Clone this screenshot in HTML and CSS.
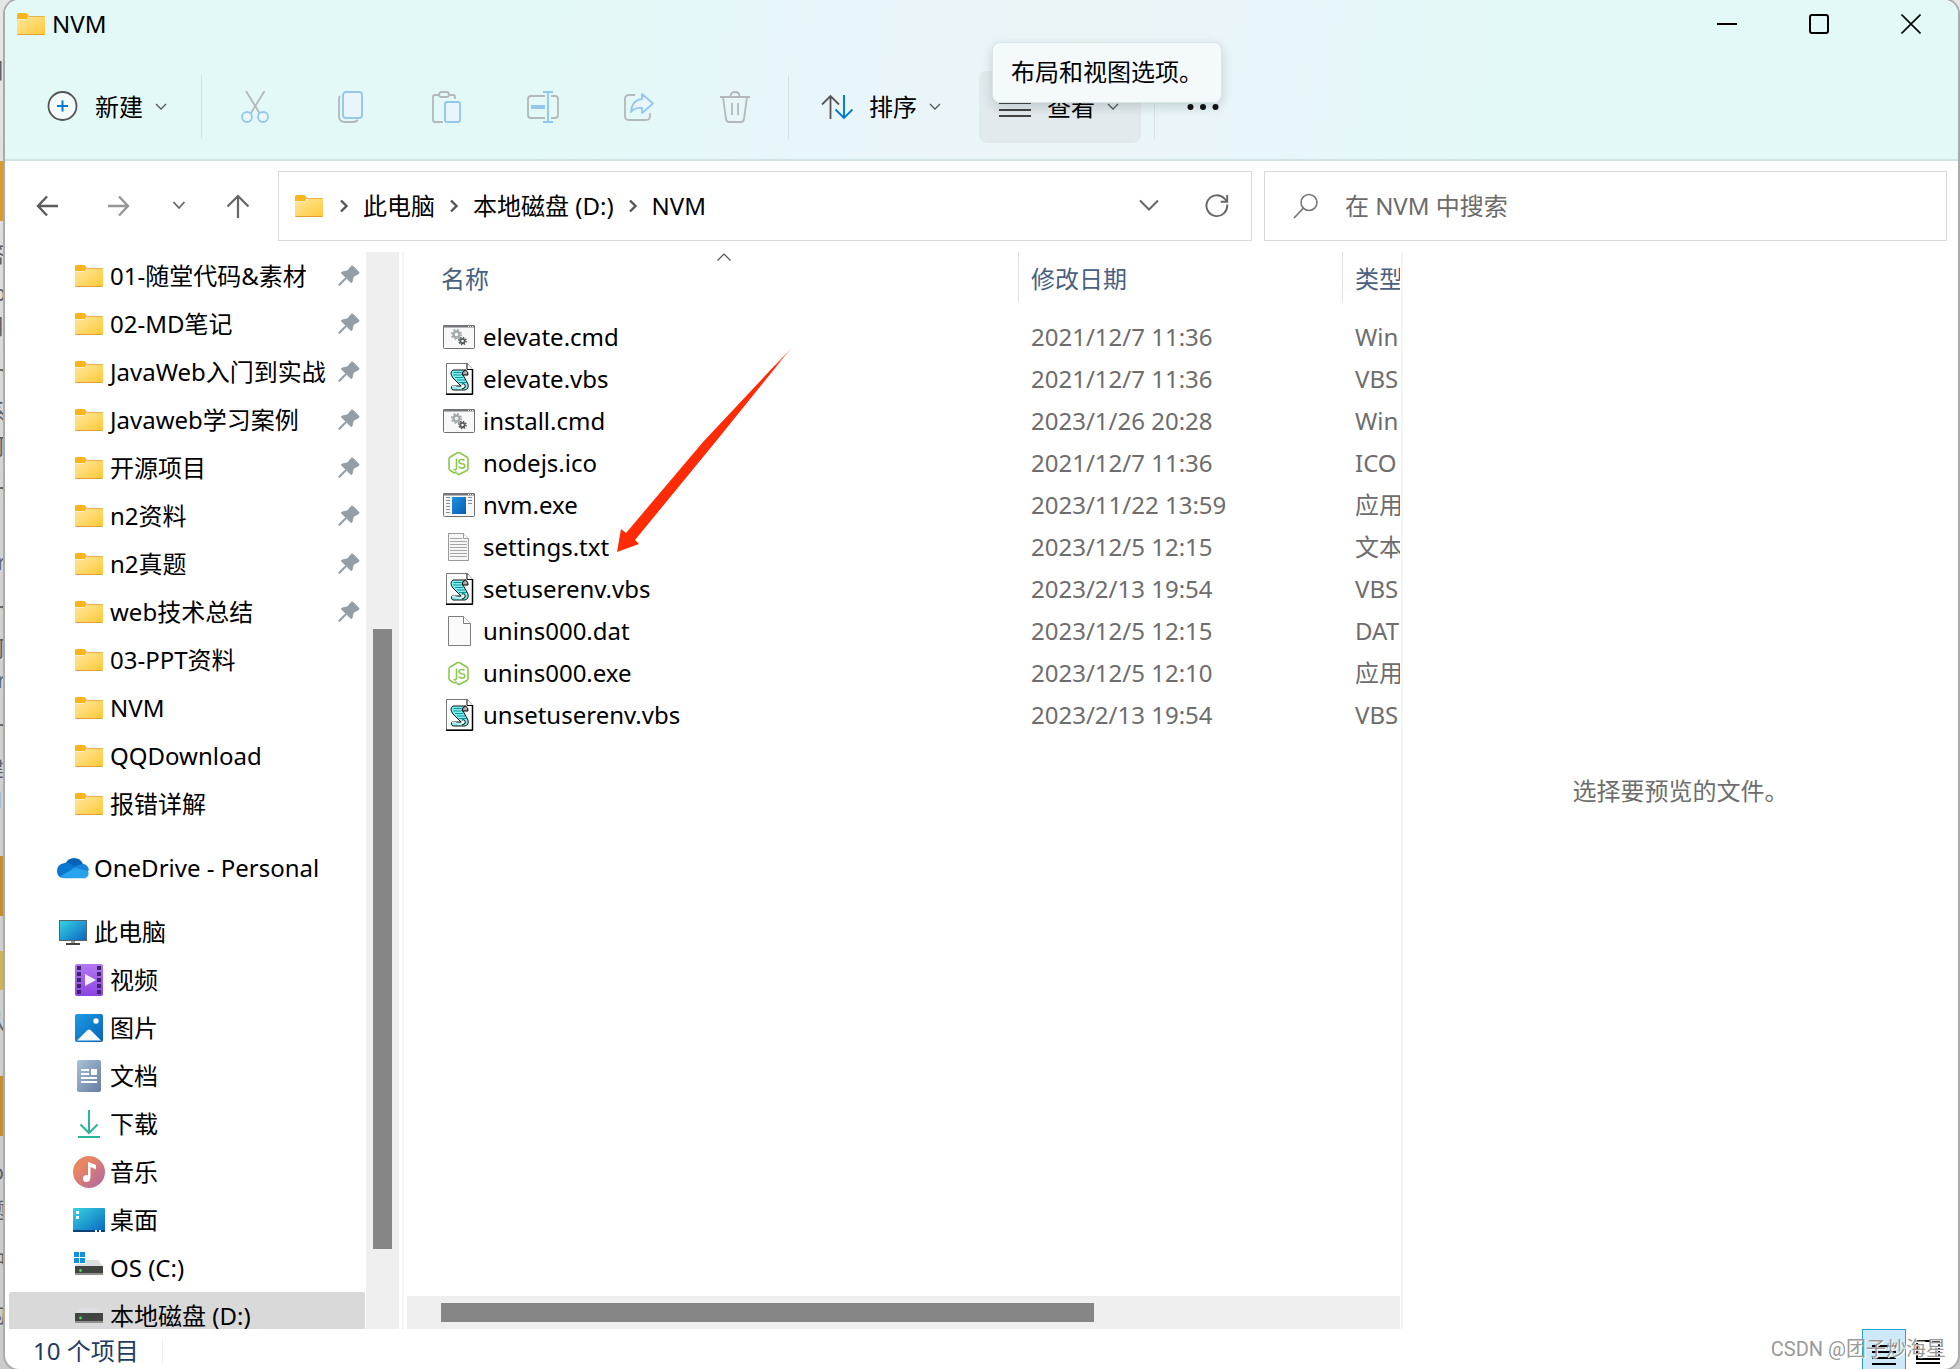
FILE: index.html
```html
<!DOCTYPE html>
<html lang="zh-CN">
<head>
<meta charset="utf-8">
<title>NVM</title>
<link rel="stylesheet" href="styles.css">
</head>
<body>
<svg class="defs" width="0" height="0" aria-hidden="true">
  <defs>
    <linearGradient id="g-folder" x1="0" y1="0" x2="1" y2="1"><stop offset="0" stop-color="#ffe8a0"/><stop offset="1" stop-color="#ffc937"/></linearGradient>
    <linearGradient id="g-screen" x1="0" y1="0" x2="1" y2="1"><stop offset="0" stop-color="#35d3e2"/><stop offset="1" stop-color="#0b66c0"/></linearGradient>
    <linearGradient id="g-video" x1="0" y1="0" x2="0" y2="1"><stop offset="0" stop-color="#b478f2"/><stop offset="1" stop-color="#8a45e0"/></linearGradient>
    <linearGradient id="g-pic" x1="0" y1="0" x2="1" y2="1"><stop offset="0" stop-color="#1c9be6"/><stop offset="1" stop-color="#0a62b4"/></linearGradient>
    <linearGradient id="g-doc" x1="0" y1="0" x2="1" y2="1"><stop offset="0" stop-color="#a9c1d6"/><stop offset="1" stop-color="#667da3"/></linearGradient>
    <linearGradient id="g-music" x1="0" y1="0" x2="1" y2="1"><stop offset="0.3" stop-color="#e88663"/><stop offset="1" stop-color="#ac64a8"/></linearGradient>
    <linearGradient id="g-app" x1="0" y1="0" x2="1" y2="1"><stop offset="0" stop-color="#1c93e0"/><stop offset="1" stop-color="#0a5cae"/></linearGradient>
    <linearGradient id="g-arrow" gradientUnits="userSpaceOnUse" x1="176" y1="0" x2="130" y2="54"><stop offset="0" stop-color="#ff2b06" stop-opacity="0.2"/><stop offset="0.4" stop-color="#ff2b06"/></linearGradient>
  </defs>
  <symbol id="folder" viewBox="0 0 32 32">
    <path d="M2 6.500q0-1.500 1.500-1.500h7q1 0 1.800.8l1.700 2.200-2 3H2z" fill="#fbb51c"/>
    <path d="M2 11.500h9q1 0 1.800-.9l1.600-1.600q.8-1 1.800-1H29q1 0 1 1v16.500q0 1.500-1.500 1.500h-25Q2 27 2 25.500z" fill="url(#g-folder)"/>
    <path d="M2.500 26.500h27" stroke="#e3a12b"/>
    <path d="M14 8.500h15.500" stroke="#eab043"/>
  </symbol>
  <symbol id="pin" viewBox="0 0 24 24">
    <path d="M14 2.500q1-1.200 2.200 0l5.300 5.300q1.200 1.200-.2 2l-5 2.700-1.300 5.500q-.4 1.200-1.300.3l-4-4-6.500 6.800q-1 .6-1.300.3t.3-1.300l6.600-6.700-4-4q-.8-.9.300-1.300l5.700-1.300z" fill="#949ea4" stroke="#949ea4"/>
  </symbol>
  <symbol id="onedrive" viewBox="0 0 32 32">
    <path d="M8 12q3-6 9-6 6.500 0 9 6l-5 7-13-2z" fill="#0562b4"/>
    <path d="M6.500 11.300q5-1.500 9 1.700l9 6-18 7Q0 25.600 0 18.700q.3-6 6.500-7.400z" fill="#0a78d0"/>
    <path d="M22 12.700q8-2.500 10 5.300l-4 5-12-7q2.500-2.600 6-3.300z" fill="#1584da"/>
    <path d="M3.500 24.300L18 15.500l13 3.800q2 4.500-2.500 7H7q-2.500-.3-3.500-2z" fill="#28a2ea"/>
  </symbol>
  <symbol id="pc" viewBox="0 0 32 32">
    <path d="M14 24h4v3h-4z" fill="#9a9a9a"/><path d="M9 27h14v2H9z" fill="#444"/>
    <rect x="2.500" y="4.500" width="27" height="20" fill="url(#g-screen)" stroke="#5a6266"/>
  </symbol>
  <symbol id="video" viewBox="0 0 32 32">
    <rect x="2" y="0" width="28" height="32" rx="2" fill="url(#g-video)"/>
    <path d="M4 2h4v4H4zm0 6h4v4H4zm0 6h4v4H4zm0 6h4v4H4zm0 6h4v4H4zM24 2h4v4h-4zm0 6h4v4h-4zm0 6h4v4h-4zm0 6h4v4h-4zm0 6h4v4h-4z" fill="#3d2370"/>
    <path d="M12 10v12l11-6z" fill="#f3ecfb"/>
  </symbol>
  <symbol id="picture" viewBox="0 0 32 32">
    <rect x="2" y="2" width="28" height="28" rx="2" fill="url(#g-pic)"/>
    <path d="M4 28.500l10.500-10.500q1.500-1.200 3 0L28 28.500z" fill="#f4f9fd"/><circle cx="23" cy="9" r="2.700" fill="#fff"/>
  </symbol>
  <symbol id="document" viewBox="0 0 32 32">
    <rect x="4" y="0" width="24" height="32" rx="2" fill="url(#g-doc)"/>
    <path d="M8 9h8v2H8zm0 4h8v2H8zm10-4h6v6h-6zM8 17h16v2H8zm0 4h16v2H8z" fill="#fff"/>
  </symbol>
  <symbol id="download" viewBox="0 0 32 32"><path d="M16 2v23M7.500 16.500l8.500 8.500 8.500-8.500M5 29h22" fill="none" stroke="#2cb59a" stroke-width="2"/></symbol>
  <symbol id="music" viewBox="0 0 32 32">
    <circle cx="16" cy="16" r="16" fill="url(#g-music)"/>
    <circle cx="13.500" cy="22.500" r="3.500" fill="#fff"/><path d="M15 22.500V6l8 3v4.500L17.500 11v11.500z" fill="#fff"/>
  </symbol>
  <symbol id="desktop" viewBox="0 0 32 32">
    <rect x="0" y="4" width="32" height="24" rx="1" fill="url(#g-screen)"/>
    <path d="M0 26h32v1q0 1-1 1H1q-1 0-1-1z" fill="#0a3f78"/>
    <path d="M3 7h3v3H3zm0 5h3v3H3zM22 26h2v2h-2zm4 0h2v2h-2z" fill="#fff"/>
  </symbol>
  <symbol id="drive" viewBox="0 0 32 32">
    <path d="M7 8h18l5 5H2z" fill="#dedfe2"/><path d="M2 13h28v9H2z" fill="#414441"/><path d="M2 21h28v2H2z" fill="#8f918f"/><circle cx="7.500" cy="18" r="1.400" fill="#3ee34a"/>
  </symbol>
  <symbol id="osdrive" viewBox="0 0 32 32">
    <path d="M7 8h18l5 6H2z" fill="#dedfe2"/><path d="M2 14h28v7H2z" fill="#414441"/><path d="M2 21h28v2H2z" fill="#8f918f"/><circle cx="7.500" cy="18.500" r="1.400" fill="#3ee34a"/>
    <path d="M0 0h13v12H0z" fill="#fff"/><path d="M1 0h5v5H1zm6 0h5v5H7zM1 6h5v5H1zm6 0h5v5H7z" fill="#1490df"/>
  </symbol>
  <symbol id="cmd" viewBox="0 0 32 32">
    <rect x="0.500" y="4.500" width="31" height="23" rx="1" fill="#f8f8f8" stroke="#6d6f71"/><path d="M0 5.500h32" stroke="#75777a" stroke-width="2"/><path d="M25 5.500h6" stroke="#e8e8e8" stroke-dasharray="1 1"/>
    <circle cx="13.500" cy="13.500" r="3" fill="none" stroke="#a3a9ac" stroke-width="2.400"/><circle cx="13.500" cy="13.500" r="4.700" fill="none" stroke="#a3a9ac" stroke-width="1.800" stroke-dasharray="1.850 1.850"/>
    <circle cx="19.500" cy="20" r="2.200" fill="none" stroke="#55595c" stroke-width="1.800"/><circle cx="19.500" cy="20" r="3.600" fill="none" stroke="#55595c" stroke-width="1.500" stroke-dasharray="1.410 1.410"/>
  </symbol>
  <symbol id="vbs" viewBox="0 0 32 32">
    <path d="M3.500 0.500h21l5 6v24.500h-26z" fill="#fff" stroke="#777"/><path d="M29.500 6v25M3 31.300h27" stroke="#000" stroke-width="1.500"/><path d="M24 .5v6h5.500" fill="#fff" stroke="#000"/>
    <path d="M10 7h13q-4 2-3 5l5 9q1 5-3 6H10q-3-1-1-4h9l-8-8q-4-5 0-8z" fill="#7ff0f0" stroke="#111"/>
    <path d="M10.500 9.500h8M10 12h8M12 14.500h8M14 17h8M16 19.500h8" stroke="#0a9296"/>
    <path d="M19 12q0-4 3.500-5 3 2 2.500 5z" fill="#aaa" stroke="#000"/><path d="M19 21q4-1 3 3.500l-3 1.500" fill="#fff" stroke="#000"/><path d="M9 23.500q3-1 5 1t5 0" fill="none" stroke="#fff"/>
  </symbol>
  <symbol id="node" viewBox="0 0 32 32">
    <path d="M13.500 24.500q-1.300 2-3 1l-3.300-2q-1.200-.7-1.200-2V12q0-1.300 1.200-2l7.100-4.200q1.200-.6 2.400 0l7.100 4.200q1.200.7 1.200 2v9.500q0 1.300-1.200 2L16 27.500l-2.500-1.200" fill="none" stroke="#8cc84b" stroke-width="1.600"/>
    <path d="M13.500 11.500v9q0 3-3 2M21.500 13.500q-1-1-3-1-2.500 0-2.500 2t2.800 2.200q3 0 3 2.200t-3 2.200q-2.500 0-3.200-1.600" fill="none" stroke="#8cc84b" stroke-width="1.600"/>
  </symbol>
  <symbol id="exe" viewBox="0 0 32 32">
    <rect x="0.500" y="4.500" width="31" height="23" rx="1" fill="#f8f8f8" stroke="#6d6f71"/><path d="M0 5.500h32" stroke="#75777a" stroke-width="2"/><path d="M25 5.500h6" stroke="#e8e8e8" stroke-dasharray="1 1"/>
    <rect x="9" y="8" width="14" height="17" fill="url(#g-app)"/><path d="M3 8.500h4m-4 3h4m-4 3h4m-4 3h4m-4 3h4m-4 3h4M25 8.500h4m-4 3h4m-4 3h4" stroke="#8b8e90"/>
  </symbol>
  <symbol id="txt" viewBox="0 0 32 32">
    <path d="M5.500 2.500h15l5 5v22h-20z" fill="#f6f6f6" stroke="#9a9a9a"/><path d="M20.500 2.500v5h5" fill="#fff" stroke="#9a9a9a"/>
    <path d="M7 7.500h12M7 10.500h17M7 13.500h17M7 16.500h17M7 19.500h17M7 22.500h17M7 25.500h17" stroke="#a6a6a6"/>
  </symbol>
  <symbol id="dat" viewBox="0 0 32 32"><path d="M5.500 1.500h15l7 7v22h-22z" fill="#fafafa" stroke="#7d7d7d"/><path d="M20.500 1.500v7h7" fill="#fff" stroke="#7d7d7d"/></symbol>
  <symbol id="chev" viewBox="0 0 12 12"><path d="M1 3l5 5 5-5" fill="none" stroke="#555" stroke-width="1.300"/></symbol>
  <symbol id="crumb" viewBox="0 0 12 16"><path d="M3 2.500L8.500 8 3 13.500" fill="none" stroke="#555" stroke-width="2.400"/></symbol>
</svg>

<svg class="backdrop" aria-hidden="true">
  <g text-anchor="end">
    <text x="5" y="78">目</text><text x="6" y="262">答</text><text x="6" y="301">b</text><text x="4" y="334">用</text><text x="7" y="381">m</text><text x="6" y="420">系</text><text x="6" y="454">可</text><text x="7" y="499">m</text><text x="6" y="570">r</text><text x="7" y="618">m</text><text x="6" y="656">可</text><text x="6" y="688">r</text><text x="7" y="736">m</text><text x="4" y="776">建</text><text x="2" y="808">l</text><text x="6" y="1030">从</text><text x="4" y="1180">o</text><text x="6" y="1218">题</text><text x="6" y="1268">中</text><text x="6" y="1322">构</text>
  </g>
</svg>

<div class="window">
  <header class="chrome">
    <div class="titlebar">
      <svg class="icon"><use href="#folder"/></svg>
      <h1 class="title">NVM</h1>
      <div class="controls">
        <button aria-label="最小化"><svg width="20" height="20" viewBox="0 0 20 20"><path d="M0 10h20" stroke="#000" stroke-width="2"/></svg></button>
        <button aria-label="最大化"><svg width="20" height="20" viewBox="0 0 20 20"><rect x="1" y="1" width="18" height="18" rx="2" fill="none" stroke="#000" stroke-width="2"/></svg></button>
        <button aria-label="关闭"><svg width="20" height="20" viewBox="0 0 20 20"><path d="M.5.5l19 19m0-19l-19 19" stroke="#000" stroke-width="1.600"/></svg></button>
      </div>
    </div>
    <div class="toolbar">
      <button class="tool"><svg class="icon" viewBox="0 0 32 32"><circle cx="15.500" cy="15" r="14" fill="#f4fbfd" stroke="#555" stroke-width="1.800"/><path d="M15.500 9.500v11M10 15h11" stroke="#0078d4" stroke-width="2"/></svg><span>新建</span><svg class="chev"><use href="#chev"/></svg></button>
      <span class="sep after-new"></span>
      <button class="tool-icon" aria-label="剪切" disabled><svg class="icon" viewBox="0 0 32 32"><path d="M7 0l13.500 22M25.500 0L12 22" stroke="#b3b8ba" stroke-width="1.800"/><circle cx="8" cy="26" r="5" fill="#eaf6fb" stroke="#93c8ec" stroke-width="1.800"/><circle cx="24" cy="26" r="5" fill="#eaf6fb" stroke="#93c8ec" stroke-width="1.800"/></svg></button>
      <button class="tool-icon" aria-label="复制" disabled><svg class="icon" viewBox="0 0 32 32"><path d="M5 5q-1 1-1 3v17q0 6 6 6h8q3 0 5-2" fill="none" stroke="#b3b8ba" stroke-width="1.800"/><rect x="8" y="1" width="19" height="26" rx="3" fill="#eaf4fb" stroke="#93c8ec" stroke-width="1.900"/></svg></button>
      <button class="tool-icon" aria-label="粘贴" disabled><svg class="icon" viewBox="0 0 32 32"><path d="M12 31H4q-2 0-2-2V6q0-2 2-2h3m12 0h3q2 0 2 2v2" fill="none" stroke="#b3b8ba" stroke-width="1.800"/><rect x="8" y="1" width="10" height="5" rx="2.500" fill="none" stroke="#b3b8ba" stroke-width="1.800"/><rect x="14" y="11" width="15" height="20" rx="2" fill="#eaf4fb" stroke="#93c8ec" stroke-width="1.900"/></svg></button>
      <button class="tool-icon" aria-label="重命名" disabled><svg class="icon" viewBox="0 0 32 32"><path d="M18 5H4Q1 5 1 8v16q0 3 3 3h14M24 5h4q3 0 3 3v16q0 3-3 3h-4" fill="none" stroke="#b3b8ba" stroke-width="1.800"/><path d="M16 1h10M21 1v30M16 31h10" stroke="#93c8ec" stroke-width="1.900"/><path d="M4 16h14" stroke="#93c8ec" stroke-width="4"/></svg></button>
      <button class="tool-icon" aria-label="共享" disabled><svg class="icon" viewBox="0 0 32 32"><path d="M12 4H6Q2 4 2 8v17q0 4 4 4h17q4 0 4-4v-3" fill="none" stroke="#b3b8ba" stroke-width="1.800"/><path d="M19 8V3l11 9.500L19 22v-5q-7-1-11 4 1-12 11-13z" fill="#eaf4fb" stroke="#93c8ec" stroke-width="1.800" stroke-linejoin="round"/></svg></button>
      <button class="tool-icon" aria-label="删除" disabled><svg class="icon" viewBox="0 0 32 32"><path d="M4 6l3 22q.5 3 3 3h12q2.500 0 3-3l3-22M1 6h30M11.500 5.500q0-4.500 4.500-4.500t4.500 4.500M13 12v12m6-12v12" fill="none" stroke="#b3b8ba" stroke-width="1.800"/></svg></button>
      <span class="sep after-delete"></span>
      <button class="tool"><svg class="icon" viewBox="0 0 32 32"><path d="M9.500 28V5M1 13.500L9.500 5l8.500 8.500" fill="none" stroke="#555" stroke-width="1.800"/><path d="M23 4v23M14.500 18.500L23 27l8.500-8.500" fill="none" stroke="#0078d4" stroke-width="1.900"/></svg><span>排序</span><svg class="chev"><use href="#chev"/></svg></button>
      <div class="view-wrap">
        <button class="tool view"><svg class="icon" viewBox="0 0 32 32"><path d="M0 12h32M0 19h32M0 25h32" stroke="#444" stroke-width="2"/></svg><span>查看</span><svg class="chev"><use href="#chev"/></svg></button>
        <div class="tooltip" role="tooltip">布局和视图选项。</div>
      </div>
      <span class="sep after-view"></span>
      <button class="tool" aria-label="更多"><svg class="icon" viewBox="0 0 32 32"><circle cx="3.500" cy="16" r="3" fill="#111"/><circle cx="16" cy="16" r="3" fill="#111"/><circle cx="28.500" cy="16" r="3" fill="#111"/></svg></button>
    </div>
  </header>

  <nav class="navrow">
    <button class="nav-wide" aria-label="后退"><svg width="24" height="24" viewBox="0 0 24 24"><path d="M22 12H3M11 2.500L2 12l9 9.500" fill="none" stroke="#5c5c5c" stroke-width="2.400"/></svg></button>
    <button class="nav-wide" aria-label="前进"><svg width="24" height="24" viewBox="0 0 24 24"><path d="M2 12h19M13 2.500l9 9.500-9 9.500" fill="none" stroke="#969696" stroke-width="2.400"/></svg></button>
    <button class="nav-thin" aria-label="最近"><svg width="14" height="14" viewBox="0 0 14 14"><path d="M1.500 3L7 9l5.500-6" fill="none" stroke="#666" stroke-width="1.800"/></svg></button>
    <button class="nav-up" aria-label="向上"><svg width="24" height="24" viewBox="0 0 24 24"><path d="M12 24V2M1.500 12.500L12 2l10.500 10.500" fill="none" stroke="#666" stroke-width="2.200"/></svg></button>
    <div class="address">
      <svg class="icon"><use href="#folder"/></svg>
      <svg class="crumb"><use href="#crumb"/></svg><a href="#pc">此电脑</a>
      <svg class="crumb"><use href="#crumb"/></svg><a href="#d">本地磁盘 (D:)</a>
      <svg class="crumb"><use href="#crumb"/></svg><a href="#nvm">NVM</a>
      <button class="drop" aria-label="展开"><svg width="20" height="20" viewBox="0 0 20 20"><path d="M1 4.500l9 9 9-9" fill="none" stroke="#666" stroke-width="2"/></svg></button>
      <button aria-label="刷新"><svg width="24" height="24" viewBox="0 0 24 24"><path d="M22.200 10.500A10.400 10.400 0 1 1 19.500 4.600L22 7M22.200 1v6.800h-6.500" fill="none" stroke="#666" stroke-width="1.900"/></svg></button>
    </div>
    <label class="search">
      <svg width="26" height="26" viewBox="0 0 26 26"><circle cx="16" cy="9.500" r="8" fill="none" stroke="#777" stroke-width="1.600"/><path d="M10.500 15L1 25" stroke="#777" stroke-width="1.800"/></svg>
      <input type="search" placeholder="在 NVM 中搜索" aria-label="在 NVM 中搜索">
    </label>
  </nav>

  <main class="panes">
    <aside class="sidebar">
      <div class="tree">
        <a href="#"><svg class="icon"><use href="#folder"/></svg><span>01-随堂代码&amp;素材</span><svg class="pin"><use href="#pin"/></svg></a>
        <a href="#"><svg class="icon"><use href="#folder"/></svg><span>02-MD笔记</span><svg class="pin"><use href="#pin"/></svg></a>
        <a href="#"><svg class="icon"><use href="#folder"/></svg><span>JavaWeb入门到实战</span><svg class="pin"><use href="#pin"/></svg></a>
        <a href="#"><svg class="icon"><use href="#folder"/></svg><span>Javaweb学习案例</span><svg class="pin"><use href="#pin"/></svg></a>
        <a href="#"><svg class="icon"><use href="#folder"/></svg><span>开源项目</span><svg class="pin"><use href="#pin"/></svg></a>
        <a href="#"><svg class="icon"><use href="#folder"/></svg><span>n2资料</span><svg class="pin"><use href="#pin"/></svg></a>
        <a href="#"><svg class="icon"><use href="#folder"/></svg><span>n2真题</span><svg class="pin"><use href="#pin"/></svg></a>
        <a href="#"><svg class="icon"><use href="#folder"/></svg><span>web技术总结</span><svg class="pin"><use href="#pin"/></svg></a>
        <a href="#"><svg class="icon"><use href="#folder"/></svg><span>03-PPT资料</span></a>
        <a href="#"><svg class="icon"><use href="#folder"/></svg><span>NVM</span></a>
        <a href="#"><svg class="icon"><use href="#folder"/></svg><span>QQDownload</span></a>
        <a href="#"><svg class="icon"><use href="#folder"/></svg><span>报错详解</span></a>
        <a href="#" class="root"><svg class="icon"><use href="#onedrive"/></svg><span>OneDrive - Personal</span></a>
        <a href="#" class="root"><svg class="icon"><use href="#pc"/></svg><span>此电脑</span></a>
        <a href="#"><svg class="icon"><use href="#video"/></svg><span>视频</span></a>
        <a href="#"><svg class="icon"><use href="#picture"/></svg><span>图片</span></a>
        <a href="#"><svg class="icon"><use href="#document"/></svg><span>文档</span></a>
        <a href="#"><svg class="icon"><use href="#download"/></svg><span>下载</span></a>
        <a href="#"><svg class="icon"><use href="#music"/></svg><span>音乐</span></a>
        <a href="#"><svg class="icon"><use href="#desktop"/></svg><span>桌面</span></a>
        <a href="#"><svg class="icon"><use href="#osdrive"/></svg><span>OS (C:)</span></a>
        <a href="#" class="selected"><svg class="icon"><use href="#drive"/></svg><span>本地磁盘 (D:)</span></a>
      </div>
      <div class="vscroll"><div class="vthumb"></div></div>
    </aside>

    <section class="files">
      <table>
        <colgroup><col class="c-name"><col class="c-date"><col></colgroup>
        <thead><tr><th>名称</th><th>修改日期</th><th>类型</th></tr></thead>
        <tbody>
          <tr><td><div class="file"><svg class="icon"><use href="#cmd"/></svg>elevate.cmd</div></td><td>2021/12/7 11:36</td><td>Win</td></tr>
          <tr><td><div class="file"><svg class="icon"><use href="#vbs"/></svg>elevate.vbs</div></td><td>2021/12/7 11:36</td><td>VBS</td></tr>
          <tr><td><div class="file"><svg class="icon"><use href="#cmd"/></svg>install.cmd</div></td><td>2023/1/26 20:28</td><td>Win</td></tr>
          <tr><td><div class="file"><svg class="icon"><use href="#node"/></svg>nodejs.ico</div></td><td>2021/12/7 11:36</td><td>ICO</td></tr>
          <tr><td><div class="file"><svg class="icon"><use href="#exe"/></svg>nvm.exe</div></td><td>2023/11/22 13:59</td><td>应用</td></tr>
          <tr><td><div class="file"><svg class="icon"><use href="#txt"/></svg>settings.txt</div></td><td>2023/12/5 12:15</td><td>文本</td></tr>
          <tr><td><div class="file"><svg class="icon"><use href="#vbs"/></svg>setuserenv.vbs</div></td><td>2023/2/13 19:54</td><td>VBS</td></tr>
          <tr><td><div class="file"><svg class="icon"><use href="#dat"/></svg>unins000.dat</div></td><td>2023/12/5 12:15</td><td>DAT</td></tr>
          <tr><td><div class="file"><svg class="icon"><use href="#node"/></svg>unins000.exe</div></td><td>2023/12/5 12:10</td><td>应用</td></tr>
          <tr><td><div class="file"><svg class="icon"><use href="#vbs"/></svg>unsetuserenv.vbs</div></td><td>2023/2/13 19:54</td><td>VBS</td></tr>
        </tbody>
      </table>
      <div class="hscroll"><div class="hthumb"></div></div>
      <svg class="sort-mark" width="14" height="8" viewBox="0 0 14 8"><path d="M.5 7.500L7 1l6.500 6.500" fill="none" stroke="#555" stroke-width="1.200"/></svg>
      <svg class="arrow" width="176" height="206" viewBox="0 0 176 206"><path d="M176 0L86 96 9 187l-5-4-4 23 22-8-4-4L100 94z" fill="url(#g-arrow)"/></svg>
    </section>

    <section class="preview">选择要预览的文件。</section>
  </main>

  <footer class="status">
    <span class="count">10 个项目</span>
    <div class="views">
      <button class="on" aria-label="详细信息"><svg width="24" height="28" viewBox="0 0 24 28"><path d="M0 7h24M0 13h24M0 19h24M0 25h24" stroke="#000" stroke-width="2"/></svg></button>
      <button aria-label="大图标"><svg width="24" height="28" viewBox="0 0 24 28"><rect x="1" y="3" width="22" height="18" fill="none" stroke="#000" stroke-width="2"/><path d="M0 25h24" stroke="#000" stroke-width="2"/></svg></button>
    </div>
    <span class="watermark">CSDN @团子炒海星</span>
  </footer>
</div>
</body>
</html>
```

FILE: styles.css
```css
* { box-sizing: border-box; }

body {
  margin: 0;
  height: 100vh;
  padding: 0 2px 0 5px;
  overflow: hidden;
  position: relative;
  color: #000;
  font: 24px/32px "Noto Sans", "Noto Sans CJK SC", sans-serif;
  background:
    linear-gradient(#d59b35, #d59b35) 0 161px / 5px 60px no-repeat,
    linear-gradient(#c48d33, #c48d33) 0 856px / 5px 60px no-repeat,
    linear-gradient(#cdb457, #cdb457) 0 951px / 5px 39px no-repeat,
    linear-gradient(#c48d33, #c48d33) 0 1076px / 5px 60px no-repeat,
    linear-gradient(#e6e6e6, #d2d2d2 40%, #cbcbcb);
}

button {
  border: 0;
  padding: 0;
  background: none;
  color: inherit;
  font: inherit;
  display: flex;
  align-items: center;
  justify-content: center;
}

a { color: inherit; text-decoration: none; }
svg { display: block; flex: none; }

.defs { position: absolute; }
.icon { width: 32px; height: 32px; }
.chev { width: 12px; height: 12px; }
.backdrop { position: absolute; left: 0; top: 0; width: 5px; height: 100%; font-size: 22px; fill: #5e6266; }

.window {
  position: relative;
  height: 100%;
  display: flex;
  flex-direction: column;
  overflow: hidden;
  border-radius: 14px;
  background: #fff;
  box-shadow: 0 0 0 2px #aaa;
}

/* Title bar and command bar */
.chrome {
  background: linear-gradient(100deg, #e3f9f7 28%, #e8f5fa 42%, #eaf5f7 55%, #e8f5fa 65%, #e3f9f7 76%);
  border-bottom: 2px solid #d1e4e5;
}
.titlebar { display: flex; align-items: center; height: 48px; padding: 0 1px 0 10px; }
.title { margin: 0 auto 0 5px; font: inherit; }
.controls { display: flex; }
.controls button { width: 92px; height: 48px; }

.toolbar { display: flex; align-items: center; height: 111px; padding: 7px 0 0 42px; }
.tool { height: 72px; }
.tool span { margin: 0 12px 0 16px; }
.tool-icon { width: 96px; height: 72px; }
.sep { width: 1px; height: 64px; background: #d3e3e5; }
.after-new { margin: 0 5px 0 34px; }
.after-delete { margin: 0 32px 0 5px; }
.after-view { margin: 0 32px 0 13px; }
.view-wrap { position: relative; margin-left: 38px; }
.view { padding: 0 22px 0 20px; border-radius: 8px; background: #e2eaed; }
.tooltip {
  position: absolute;
  left: 13px;
  top: -29px;
  padding: 13px 18px 14px;
  border: 1px solid #dbe4e7;
  border-radius: 8px;
  background: #f4f9fc;
  box-shadow: 0 4px 12px rgba(0, 30, 40, 0.16);
  white-space: nowrap;
}

/* Navigation row */
.navrow { display: flex; flex: none; height: 91px; padding: 10px 11px 11px 8px; }
.nav-wide { width: 70px; }
.nav-thin { width: 52px; }
.nav-up { width: 66px; margin-right: 7px; }
.address, .search { display: flex; align-items: center; border: 1px solid #d9d9d9; }
.address { flex: 22 1 0; margin-right: 12px; padding-left: 14px; }
.crumb { width: 12px; height: 16px; margin: 0 13px; }
.address button { width: 68px; height: 68px; }
.address .drop { margin-left: auto; }
.search { flex: 15 1 0; padding-left: 28px; gap: 26px; }
.search input { flex: 1; min-width: 0; border: 0; padding: 0; outline: 0; background: none; font: inherit; }
.search input::placeholder { color: #6b6b6b; opacity: 1; }

/* Three panes */
.panes { display: flex; flex: 1; min-height: 0; }
.sidebar { display: flex; flex: none; width: 399px; padding-right: 3px; border-right: 2px solid #f5f5f5; overflow: hidden; }
.tree { flex: 1; padding: 0 1px 0 4px; white-space: nowrap; }
.tree a { display: flex; align-items: center; gap: 5px; height: 48px; padding: 0 4px 0 64px; }
.tree a.root { margin: 16px 0 0; padding-left: 48px; }
.tree a.selected { border-radius: 2px; background: #d9d9d9; }
.pin { width: 24px; height: 24px; margin-left: auto; }
.vscroll { display: grid; grid-template-rows: 377fr 620fr 80fr; width: 33px; padding: 0 7px; background: #efefef; }
.vthumb { grid-row: 2; background: #868686; }

.files { position: relative; display: flex; flex-direction: column; justify-content: space-between; flex: 1; min-width: 0; padding: 0 1px 0 3px; overflow: hidden; }
table { width: 100%; table-layout: fixed; border-spacing: 0; white-space: nowrap; }
.c-name { width: 611px; }
.c-date { width: 324px; }
th, td { padding: 0 0 0 13px; overflow: hidden; text-align: left; }
th { height: 64px; vertical-align: top; font-weight: 400; line-height: 54px; color: #4a6080; background: linear-gradient(#e2e2e2, #e2e2e2) 0 0 / 1px 50px no-repeat; }
th:first-child { padding-left: 34px; background: none; }
td { height: 42px; color: #6d6d6d; }
td:first-child { padding-left: 36px; color: #000; }
.file { display: flex; align-items: center; gap: 8px; }
.hscroll { display: grid; grid-template-columns: 34fr 653fr 306fr; height: 33px; padding: 7px 0; background: #efefef; }
.hthumb { grid-column: 2; background: #868686; }
.sort-mark { position: absolute; left: 313px; top: 1px; }
.arrow { position: absolute; left: 213px; top: 94px; }

.preview { display: flex; flex: none; align-items: center; justify-content: center; width: 557px; border-left: 2px solid #f5f5f5; color: #6d6d6d; }

/* Status bar */
.status { position: relative; display: flex; flex: none; height: 40px; justify-content: space-between; }
.count { align-self: center; margin: 4px 0 0 28px; padding-right: 23px; border-right: 1px solid #eee; line-height: 24px; color: #1f3c62; }
.views { display: flex; padding-right: 8px; }
.views button { width: 44px; padding-top: 6px; }
.views .on { border: 1px solid #26a0da; border-bottom: 0; background: #cde8f6; }
.watermark { position: absolute; right: 12px; top: 8px; font: 20px/24px Roboto, "Noto Sans CJK SC", sans-serif; color: #999; text-shadow: 1px 1px #fff; }
```
